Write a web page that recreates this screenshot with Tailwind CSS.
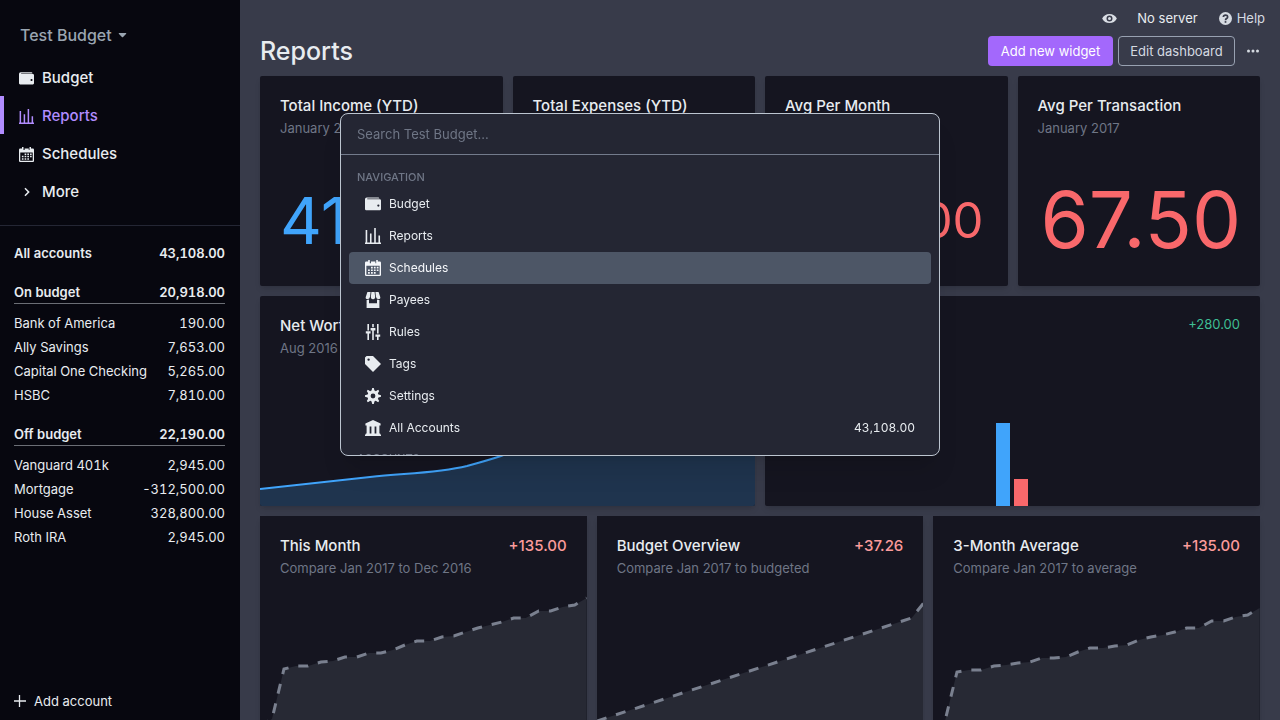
<!DOCTYPE html>
<html lang="en">
<head>
<meta charset="utf-8">
<meta name="viewport" content="width=device-width, initial-scale=1">
<title>Reports - Test Budget</title>
<script src="https://cdn.jsdelivr.net/npm/@tailwindcss/browser@4"></script>
</head>
<body class="h-screen overflow-hidden bg-[#383b4a] font-['Inter',sans-serif] text-[13px] leading-4 text-[#e8ecf0]">
<!-- Shared icons -->
<svg class="hidden" aria-hidden="true">
  <symbol id="wallet" viewBox="0 0 20 20"><path fill="currentColor" fill-rule="evenodd" d="M0 4A2.200 2.200 0 0 1 2.200 1.800H16.500A1.500 1.500 0 0 1 18 3.200H2.800v.9H18.500A1.500 1.500 0 0 1 20 5.600V16.400A1.500 1.500 0 0 1 18.500 17.900H1.500A1.500 1.500 0 0 1 0 16.400zM16.700 13.300a1.400 1.400 0 1 0 0-2.800 1.400 1.400 0 0 0 0 2.800z"/></symbol>
  <symbol id="bars" viewBox="0 0 20 20"><path fill="currentColor" d="M0 18h20v2H0zM.8 2.500h2V19h-2zM6.200 7h2v12h-2zM11.500 0h2v19h-2zM16.800 9.500h2V19h-2z"/></symbol>
  <symbol id="calendar" viewBox="0 0 20 20"><path fill="currentColor" fill-rule="evenodd" d="M4 0h2v4h1.500V2H13v2h1V0h2v2h2.500A1.500 1.500 0 0 1 20 3.500v15a1.500 1.500 0 0 1-1.500 1.500h-17A1.500 1.500 0 0 1 0 18.500v-15A1.500 1.500 0 0 1 1.500 2H4zM1.700 7.300v11h16.600v-11z"/><path fill="currentColor" d="M7.500 8.500h2.200v2H7.500zm3.600 0h2.200v2h-2.200zm3.600 0h2.200v2h-2.200zM3.800 11.800H6v2H3.800zm3.700 0h2.200v2H7.500zm3.600 0h2.200v2h-2.200zm3.600 0h2.200v2h-2.200zM3.800 15.100H6v2H3.800zm3.700 0h2.200v2H7.500zm3.600 0h2.200v2h-2.200z"/></symbol>
  <symbol id="store" viewBox="0 0 20 20"><path fill="currentColor" d="M18 9.870V20H2V9.870a4.250 4.250 0 0 0 3-.38V14h10V9.500a4.260 4.260 0 0 0 3 .37zM3 0h4l-.67 6.030A3.430 3.430 0 0 1 3 9C1.340 9 .42 7.730.95 6.150L3 0zm5 0h4l.7 6.300c.17 1.500-.91 2.700-2.420 2.700h-.56A2.380 2.380 0 0 1 7.300 6.300L8 0zm5 0h4l2.050 6.150C19.580 7.730 18.650 9 17 9a3.420 3.420 0 0 1-3.330-2.970L13 0z"/></symbol>
  <symbol id="tuning" viewBox="0 0 20 20"><path fill="currentColor" d="M17 16v4h-2v-4h-2v-3h6v3h-2zM1 9h6v3H1V9zm6-4h6v3H7V5zM3 0h2v8H3V0zm12 0h2v12h-2V0zM9 0h2v4H9V0zM3 12h2v8H3v-8zm6-4h2v12H9V8z"/></symbol>
  <symbol id="tag" viewBox="0 0 20 20"><path fill="currentColor" d="M0 10V2l2-2h8l10 10-10 10L0 10zm4.500-4a1.500 1.500 0 1 0 0-3 1.500 1.500 0 0 0 0 3z"/></symbol>
  <symbol id="cog" viewBox="0 0 20 20"><path fill="currentColor" d="M3.940 6.500L2.220 3.640l1.420-1.420L6.500 3.940c.52-.3 1.100-.54 1.700-.7L9 0h2l.8 3.240c.6.16 1.180.4 1.700.7l2.860-1.720 1.420 1.420-1.720 2.860c.3.52.54 1.100.7 1.700L20 9v2l-3.240.8c-.16.6-.4 1.180-.7 1.700l1.720 2.860-1.420 1.420-2.860-1.720c-.52.3-1.100.54-1.700.7L11 20H9l-.8-3.240c-.6-.16-1.180-.4-1.700-.7l-2.860 1.720-1.420-1.420 1.720-2.860c-.3-.52-.54-1.100-.7-1.700L0 11V9l3.240-.8c.16-.6.4-1.180.7-1.700zM10 13a3 3 0 1 0 0-6 3 3 0 0 0 0 6z"/></symbol>
  <symbol id="bank" viewBox="0 0 20 20"><path fill="currentColor" fill-rule="evenodd" d="M10 0l9.500 4.500V7H18v10h1v1.200h1V20H0v-1.800h1V17h1V7H.5V4.500zM5.800 8v9H8V8zm6.200 0v9h2.200V8z"/></symbol>
</svg>

<div class="flex h-full">
  <aside class="flex w-60 shrink-0 flex-col bg-[#07070f]">
    <button type="button" class="flex items-center gap-1.5 px-5 pt-6 pb-3 text-[16px] leading-[22px] font-medium text-[#9aa5b1]">Test Budget
      <svg class="w-[9px]" viewBox="0 0 9 6" aria-hidden="true"><path fill="currentColor" d="M1.500 1h6c.8 0 1 .6.500 1.100L5.100 5a.8.8 0 0 1-1.200 0L1 2.100C.5 1.600.7 1 1.500 1z"/></svg>
    </button>
    <nav class="flex flex-col text-[15px] leading-5 font-medium">
      <a href="#" class="flex h-[38px] items-center gap-2 pt-0.5 pl-[19px]"><svg class="size-[15px]" aria-hidden="true"><use href="#wallet"/></svg>Budget</a>
      <a href="#" aria-current="page" class="flex h-[38px] items-center gap-2 border-l-4 border-[#b18cff] pt-0.5 pl-[15px] text-[#b18cff]"><svg class="size-[15px]" aria-hidden="true"><use href="#bars"/></svg>Reports</a>
      <a href="#" class="flex h-[38px] items-center gap-2 pt-0.5 pl-[19px]"><svg class="size-[15px]" aria-hidden="true"><use href="#calendar"/></svg>Schedules</a>
      <button type="button" class="flex h-[38px] items-center gap-2 pt-0.5 pl-[19px]"><span class="flex w-[15px] justify-center"><svg class="size-3" viewBox="0 0 20 20" aria-hidden="true"><path fill="currentColor" d="M12.950 10.707l.707-.707L8 4.343 6.586 5.757 10.828 10l-4.242 4.243L8 15.657l4.950-4.950z" transform="translate(-2.500 -2.500) scale(1.250)"/></svg></span>More</button>
    </nav>
    <div class="mt-[15px] flex flex-col border-t border-[#242634] pt-[15px] pr-[15px] pl-3.5 tabular-nums">
      <a href="#" class="flex h-6 items-center justify-between font-semibold"><span>All accounts</span><span>43,108.00</span></a>
      <a href="#" class="mt-4 mb-[7px] flex h-[23px] items-center justify-between border-b border-[#6b6e75] font-semibold"><span>On budget</span><span>20,918.00</span></a>
      <a href="#" class="flex h-6 items-center justify-between"><span>Bank of America</span><span>190.00</span></a>
      <a href="#" class="flex h-6 items-center justify-between"><span>Ally Savings</span><span>7,653.00</span></a>
      <a href="#" class="flex h-6 items-center justify-between"><span>Capital One Checking</span><span>5,265.00</span></a>
      <a href="#" class="flex h-6 items-center justify-between"><span>HSBC</span><span>7,810.00</span></a>
      <a href="#" class="mt-4 mb-[7px] flex h-[23px] items-center justify-between border-b border-[#6b6e75] font-semibold"><span>Off budget</span><span>22,190.00</span></a>
      <a href="#" class="flex h-6 items-center justify-between"><span>Vanguard 401k</span><span>2,945.00</span></a>
      <a href="#" class="flex h-6 items-center justify-between"><span>Mortgage</span><span>-312,500.00</span></a>
      <a href="#" class="flex h-6 items-center justify-between"><span>House Asset</span><span>328,800.00</span></a>
      <a href="#" class="flex h-6 items-center justify-between"><span>Roth IRA</span><span>2,945.00</span></a>
    </div>
    <button type="button" class="mt-auto flex items-center gap-2 px-3.5 pb-[11px]"><svg class="size-3" viewBox="0 0 12 12" aria-hidden="true"><path stroke="currentColor" stroke-width="1.300" d="M5.500 0v12M0 6h12"/></svg>Add account</button>
  </aside>

  <main class="flex min-w-0 flex-1 flex-col">
    <header class="flex h-9 shrink-0 items-center justify-end pr-[15px]">
      <button type="button" aria-label="Privacy mode" class="mr-5"><svg class="size-[15px]" viewBox="0 0 20 20" aria-hidden="true"><path fill="#d9dde4" d="M.2 10a11 11 0 0 1 19.600 0A11 11 0 0 1 .2 10zm9.800 4a4 4 0 1 0 0-8 4 4 0 0 0 0 8zm0-2a2 2 0 1 1 0-4 2 2 0 0 1 0 4z"/></svg></button>
      <button type="button" class="mr-[21px]">No server</button>
      <button type="button" class="flex items-center gap-[5px] text-[#d5dae1]"><svg class="size-[13px]" viewBox="0 0 20 20" aria-hidden="true"><circle cx="10" cy="10" r="10" fill="currentColor"/><path fill="none" stroke="#383b4a" stroke-width="2.600" d="M6.700 7.700c.2-4 6.700-3.800 6.600-.2 0 2.500-3.300 2.400-3.300 5"/><path fill="#383b4a" d="M8.700 14h2.600v2.600H8.700z"/></svg>Help</button>
    </header>
    <div class="flex h-[30px] shrink-0 items-center gap-[5px] px-5">
      <h1 class="mr-auto text-[25px] leading-[30px] font-medium">Reports</h1>
      <button type="button" class="h-[30px] w-[125px] rounded bg-[#a368fc] text-white">Add new widget</button>
      <button type="button" class="h-[30px] w-[117px] rounded border border-[#98a1b1] text-[#d5dae1]">Edit dashboard</button>
      <button type="button" aria-label="Menu" class="flex h-[30px] w-5 items-center justify-end pr-px"><svg class="h-3 w-3 shrink-0" viewBox="0 0 12 12" aria-hidden="true"><g fill="#d5dae1"><circle cx="1.500" cy="6" r="1.500"/><circle cx="6" cy="6" r="1.500"/><circle cx="10.500" cy="6" r="1.500"/></g></svg></button>
    </div>

    <div class="flex flex-col gap-2.5 px-5 pt-2.5 [&_h2]:text-[15px] [&_h2]:leading-5 [&_h2]:font-medium [&_h2+p]:mt-1 [&_h2+p]:text-[#6f7686]">
      <div class="grid grid-cols-4 gap-2.5">
        <section class="flex h-[210px] flex-col rounded-xs bg-[#151520] p-5 shadow-md">
          <h2>Total Income (YTD)</h2><p>January 2017</p>
          <div class="flex flex-1 items-center pt-[38px] text-[65px] leading-none text-[#40a4fb]">41,95</div>
        </section>
        <section class="flex h-[210px] flex-col rounded-xs bg-[#151520] p-5 shadow-md">
          <h2>Total Expenses (YTD)</h2><p>January 2017</p>
          <div class="flex flex-1 items-center justify-center pt-[38px] text-[65px] leading-none text-[#f9686b]">67.50</div>
        </section>
        <section class="flex h-[210px] flex-col rounded-xs bg-[#151520] p-5 shadow-md">
          <h2>Avg Per Month</h2><p>January 2017</p>
          <div class="flex flex-1 items-center justify-center pt-[38px] text-[49px] leading-none text-[#f9686b]">2,160.00</div>
        </section>
        <section class="flex h-[210px] flex-col rounded-xs bg-[#151520] p-5 shadow-md">
          <h2>Avg Per Transaction</h2><p>January 2017</p>
          <div class="flex flex-1 items-center justify-center pt-[38px] pl-1 text-[78px] leading-none text-[#f9686b]">67.50</div>
        </section>
      </div>

      <div class="grid grid-cols-2 gap-2.5">
        <section class="flex h-[210px] flex-col overflow-hidden rounded-xs bg-[#151520] shadow-md">
          <div class="p-5"><h2>Net Worth</h2><p>Aug 2016 - Jan 2017</p></div>
          <svg class="mt-auto h-[100px] w-full" viewBox="0 0 495 100" preserveAspectRatio="none" aria-hidden="true">
            <path fill="#1f344e" d="M0 83C36 79 73 75 110 71C150 67 178 67 207 60C218 57 229 54 241 50C280 35 310 15 340 12L495 5V100H0z"/>
            <path fill="none" stroke="#40a4fb" stroke-width="2" d="M0 83C36 79 73 75 110 71C150 67 178 67 207 60C218 57 229 54 241 50C280 35 310 15 340 12L495 5"/>
          </svg>
        </section>
        <section class="flex h-[210px] flex-col overflow-hidden rounded-xs bg-[#151520] shadow-md">
          <div class="flex justify-between p-5"><div><h2>Cash Flow</h2><p>January 2017</p></div><p class="text-[#3ebd93]">+280.00</p></div>
          <div class="mt-auto flex items-end justify-center gap-1 pr-0.5"><div class="h-[83px] w-3.5 bg-[#40a4fb]"></div><div class="h-[27px] w-3.5 bg-[#f9686b]"></div></div>
        </section>
      </div>

      <div class="grid grid-cols-3 gap-2.5">
        <section class="flex h-[210px] flex-col bg-[#151520] shadow-md">
          <div class="flex justify-between p-5 pb-0"><div><h2>This Month</h2><p>Compare Jan 2017 to Dec 2016</p></div><p class="text-[15px] leading-5 font-medium text-[#fb9b9b]">+135.00</p></div>
          <svg class="mt-auto h-[140px] w-full" viewBox="0 0 327 140" preserveAspectRatio="none" aria-hidden="true">
            <path fill="#272934" d="M0 140L12 133L24 83L36 80H48L61 76L73 75L85 71H97L109 67H121L133 64L145 59L157 55H170L182 51L194 50L206 46L218 42L230 39L242 36L254 32H266L279 25H291L303 21L315 19L327 12V140z"/>
            <path fill="none" stroke="#7a808f" stroke-width="3" stroke-dasharray="10 10" d="M0 140L12 133L24 83L36 80H48L61 76L73 75L85 71H97L109 67H121L133 64L145 59L157 55H170L182 51L194 50L206 46L218 42L230 39L242 36L254 32H266L279 25H291L303 21L315 19L327 12"/>
          </svg>
        </section>
        <section class="flex h-[210px] flex-col bg-[#151520] shadow-md">
          <div class="flex justify-between p-5 pb-0"><div><h2>Budget Overview</h2><p>Compare Jan 2017 to budgeted</p></div><p class="text-[15px] leading-5 font-medium text-[#fb9b9b]">+37.26</p></div>
          <svg class="mt-auto h-[140px] w-full" viewBox="0 0 327 140" preserveAspectRatio="none" aria-hidden="true">
            <path fill="#272934" d="M0 135L315 32L327 17V140H0z"/>
            <path fill="none" stroke="#7a808f" stroke-width="3" stroke-dasharray="10 10" d="M0 135L315 32L327 17"/>
          </svg>
        </section>
        <section class="flex h-[210px] flex-col bg-[#151520] shadow-md">
          <div class="flex justify-between p-5 pb-0"><div><h2>3-Month Average</h2><p>Compare Jan 2017 to average</p></div><p class="text-[15px] leading-5 font-medium text-[#fb9b9b]">+135.00</p></div>
          <svg class="mt-auto h-[140px] w-full" viewBox="0 0 327 140" preserveAspectRatio="none" aria-hidden="true">
            <path fill="#272934" d="M0 140L12 135L24 86L36 84H48L61 80L73 79L85 77L97 76L109 72H121L133 71L145 66L157 62L170 62L182 60L194 59L206 54L218 51L230 49L242 46L254 42H266L279 35H291L303 31L315 29L327 22V140z"/>
            <path fill="none" stroke="#7a808f" stroke-width="3" stroke-dasharray="10 10" stroke-dashoffset="2" d="M0 140L12 135L24 86L36 84H48L61 80L73 79L85 77L97 76L109 72H121L133 71L145 66L157 62L170 62L182 60L194 59L206 54L218 51L230 49L242 46L254 42H266L279 35H291L303 31L315 29L327 22"/>
          </svg>
        </section>
      </div>
    </div>
  </main>
</div>

<!-- Command bar -->
<div class="fixed inset-0 flex items-start justify-center pt-[113px]">
  <div role="dialog" aria-label="Command bar" class="flex h-[343px] w-full max-w-[600px] flex-col overflow-hidden rounded-lg border border-[#bcc5d0] bg-[#242633] shadow-xl">
    <input type="text" aria-label="Search" placeholder="Search Test Budget..." class="h-[41px] shrink-0 border-b border-[#737b8c] px-4 text-[13px] outline-none placeholder:text-[#6f7686]">
    <div class="flex flex-1 flex-col overflow-hidden px-2 pt-[15px] text-[12px]">
      <h3 class="h-4 shrink-0 px-2 text-[11px] leading-[14px] font-medium text-[#6f7686]">NAVIGATION</h3>
      <div role="listbox" aria-label="Navigation" class="flex flex-col pt-0.5">
        <button type="button" role="option" class="flex h-8 shrink-0 items-center gap-2 px-4"><svg class="size-4" aria-hidden="true"><use href="#wallet"/></svg>Budget</button>
        <button type="button" role="option" class="flex h-8 shrink-0 items-center gap-2 px-4"><svg class="size-4" aria-hidden="true"><use href="#bars"/></svg>Reports</button>
        <button type="button" role="option" aria-selected="true" class="flex h-8 shrink-0 items-center gap-2 rounded bg-[#4d5666] px-4 text-[#f5f7fa]"><svg class="size-4" aria-hidden="true"><use href="#calendar"/></svg>Schedules</button>
        <button type="button" role="option" class="flex h-8 shrink-0 items-center gap-2 px-4"><svg class="size-4" aria-hidden="true"><use href="#store"/></svg>Payees</button>
        <button type="button" role="option" class="flex h-8 shrink-0 items-center gap-2 px-4"><svg class="size-4" aria-hidden="true"><use href="#tuning"/></svg>Rules</button>
        <button type="button" role="option" class="flex h-8 shrink-0 items-center gap-2 px-4"><svg class="size-4" aria-hidden="true"><use href="#tag"/></svg>Tags</button>
        <button type="button" role="option" class="flex h-8 shrink-0 items-center gap-2 px-4"><svg class="size-4" aria-hidden="true"><use href="#cog"/></svg>Settings</button>
        <button type="button" role="option" class="flex h-8 shrink-0 items-center gap-2 px-4"><svg class="size-4" aria-hidden="true"><use href="#bank"/></svg>All Accounts<span class="ml-auto tabular-nums">43,108.00</span></button>
      </div>
      <h3 class="mt-[7px] shrink-0 px-2 text-[11px] leading-[14px] font-medium text-[#6f7686]">ACCOUNTS</h3>
    </div>
  </div>
</div>
</body>
</html>
